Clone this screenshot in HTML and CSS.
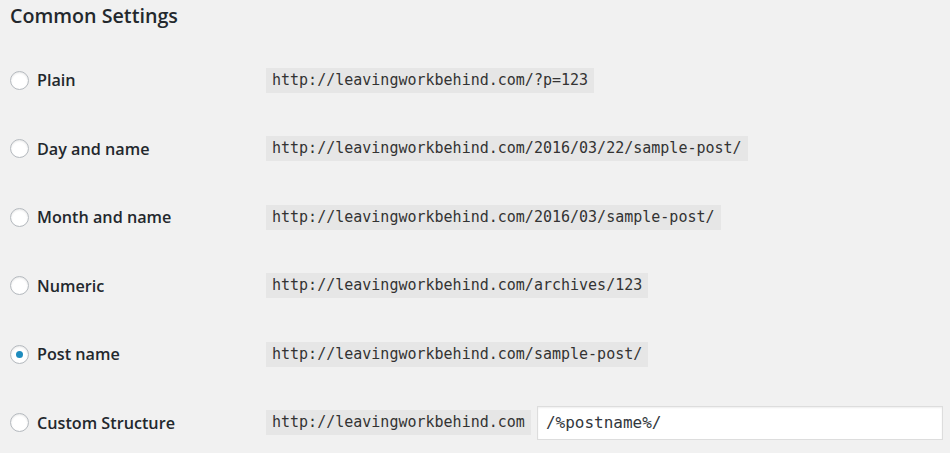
FILE: index.html
```html
<!DOCTYPE html>
<html lang="en">
<head>
  <meta charset="UTF-8" />
  <title>Permalink Settings</title>
  <link rel="stylesheet" href="styles.css">
</head>
<body>
  <h2>Common Settings</h2>
  <form class="permalinks">
    <div class="row">
      <label class="choice"><input type="radio" name="structure" value="plain"> Plain</label>
      <code>http://leavingworkbehind.com/?p=123</code>
    </div>
    <div class="row">
      <label class="choice"><input type="radio" name="structure" value="day"> Day and name</label>
      <code>http://leavingworkbehind.com/2016/03/22/sample-post/</code>
    </div>
    <div class="row">
      <label class="choice"><input type="radio" name="structure" value="month"> Month and name</label>
      <code>http://leavingworkbehind.com/2016/03/sample-post/</code>
    </div>
    <div class="row">
      <label class="choice"><input type="radio" name="structure" value="numeric"> Numeric</label>
      <code>http://leavingworkbehind.com/archives/123</code>
    </div>
    <div class="row">
      <label class="choice"><input type="radio" name="structure" value="post" checked> Post name</label>
      <code>http://leavingworkbehind.com/sample-post/</code>
    </div>
    <div class="row">
      <label class="choice"><input type="radio" name="structure" value="custom"> Custom Structure</label>
      <code>http://leavingworkbehind.com</code>
      <input class="custom" type="text" value="/%postname%/">
    </div>
  </form>
</body>
</html>
```

FILE: styles.css
```css
body {
  margin: 0;
  padding: 0 0 0 10px;
  background: #f1f1f1;
  color: #23282d;
  font-family: 'Open Sans', 'Liberation Sans', sans-serif;
  overflow: hidden;
}
h2 {
  margin: 0;
  padding-top: 3px;
  font-size: 19.7px;
  font-weight: 600;
  line-height: 26px;
}
.permalinks {
  margin-top: 17px;
}
.row {
  display: flex;
  align-items: center;
  height: 68.5px;
}
.choice {
  display: flex;
  align-items: center;
  width: 256px;
  font-size: 16.2px;
  font-weight: 600;
}
.choice input {
  appearance: none;
  width: 19px;
  height: 19px;
  margin: 0 8px 0 0;
  border: 1px solid #b4b9be;
  border-radius: 50%;
  background: #fff;
  box-shadow: inset 0 1px 2px rgba(0,0,0,0.1);
  display: flex;
  align-items: center;
  justify-content: center;
}
.choice input:checked::before {
  content: '';
  width: 7px;
  height: 7px;
  border-radius: 50%;
  background: #1e8cbe;
}
code {
  font-family: 'DejaVu Sans Mono', 'Liberation Mono', monospace;
  font-size: 15px;
  line-height: 19px;
  padding: 3px 6px;
  background: #e6e6e6;
  color: #333;
}
.custom {
  margin-left: 6px;
  width: 406px;
  height: 34px;
  box-sizing: border-box;
  padding: 0 8px;
  border: 1px solid #ddd;
  box-shadow: inset 0 1px 2px rgba(0,0,0,0.07);
  background: #fff;
  color: #32373c;
  font-family: 'DejaVu Sans Mono', 'Liberation Mono', monospace;
  font-size: 16px;
}
```
